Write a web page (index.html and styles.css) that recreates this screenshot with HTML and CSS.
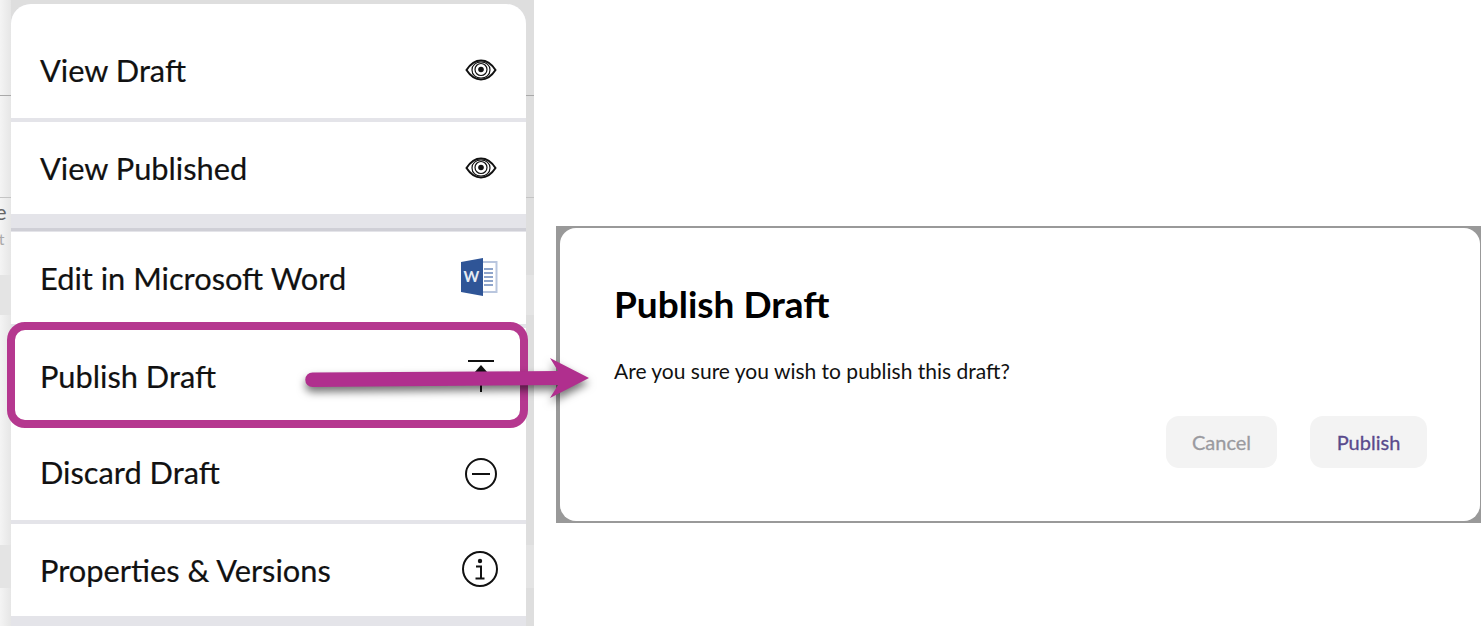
FILE: index.html
```html
<!DOCTYPE html>
<html lang="en">
<head>
  <meta charset="UTF-8">
  <title>Publish Draft</title>
  <link rel="stylesheet" href="styles.css">
</head>
<body>
<div class="page">
  <div class="sheet">
    <span class="behind behind-e">e</span>
    <span class="behind behind-at">at</span>

    <div class="menu">
      <div class="menu-item first">
        <span>View Draft</span>
        <svg class="icon" viewBox="0 0 32 24"><path class="line" d="M1.5 12C6 5 11 2.5 16 2.5S26 5 30.5 12C26 19 21 21.500 16 21.500S6 19 1.500 12Z"/><path class="line thin" d="M7 12c0-5 4-8 9-8s9 3 9 8-4 8-9 8-9-3-9-8Z"/><circle class="line thin" cx="16" cy="11.500" r="6"/><circle class="dot" cx="16" cy="11.500" r="2.800"/></svg>
      </div>
      <div class="menu-item second">
        <span>View Published</span>
        <svg class="icon" viewBox="0 0 32 24"><path class="line" d="M1.5 12C6 5 11 2.5 16 2.5S26 5 30.5 12C26 19 21 21.500 16 21.500S6 19 1.500 12Z"/><path class="line thin" d="M7 12c0-5 4-8 9-8s9 3 9 8-4 8-9 8-9-3-9-8Z"/><circle class="line thin" cx="16" cy="11.500" r="6"/><circle class="dot" cx="16" cy="11.500" r="2.800"/></svg>
      </div>
      <div class="menu-divider"></div>
      <div class="menu-item edit">
        <span>Edit in Microsoft Word</span>
        <svg class="icon word" viewBox="0 0 38 38">
          <path fill="#b9c6de" d="M22 3h15.500v32H22z"/>
          <path fill="#fff" d="M22 5h13.500v28H22z"/>
          <path fill="#8fa5cb" d="M24 10h9v2h-9zM24 14h9v2h-9zM24 18h9v2h-9zM24 22h9v2h-9zM24 26h9v2h-9z"/>
          <path fill="#2f5597" d="M1 4 23 0v38L1 34Z"/>
          <text class="word-letter" x="11.500" y="24" text-anchor="middle">W</text>
        </svg>
      </div>
      <div class="menu-item publish">
        <span>Publish Draft</span>
        <svg class="icon" viewBox="0 0 32 34"><path class="line" d="M3 2h26"/><path class="line" d="M16 33V9"/><path class="dot" d="M16 6l7 8H9Z"/></svg>
      </div>
      <div class="menu-item discard">
        <span>Discard Draft</span>
        <svg class="icon" viewBox="0 0 32 32"><circle class="line" cx="16" cy="16" r="15"/><path class="line" d="M7 16h18"/></svg>
      </div>
      <div class="menu-item props">
        <span>Properties &amp; Versions</span>
        <svg class="icon" viewBox="0 0 36 36"><circle class="line" cx="18" cy="18" r="17"/><circle class="dot" cx="18" cy="10" r="2.200"/><path class="line" d="M14 15.500h5V27M13.500 27.500h9"/></svg>
      </div>
    </div>
  </div>

  <div class="dialog">
    <div class="dialog-inner">
      <h1>Publish Draft</h1>
      <p>Are you sure you wish to publish this draft?</p>
      <div class="dialog-actions">
        <button class="btn btn-cancel">Cancel</button>
        <button class="btn btn-publish">Publish</button>
      </div>
    </div>
  </div>

  <!-- callout over the screenshot -->
  <div class="highlight"></div>
  <svg class="arrow" viewBox="0 0 300 60" width="300" height="60">
    <path d="M13.500 14.500 259 13 251 0 290 20 251 40 259 27 13.500 29a7.250 7.250 0 0 1 0-14.500Z"/>
  </svg>
</div>
</body>
</html>
```

FILE: styles.css
```css
* {
  margin: 0;
  padding: 0;
  box-sizing: border-box;
}

body {
  font-family: 'Lato', sans-serif;
  background-color: white;
  color: #111;
  overflow: hidden;
}

.page {
  position: relative;
  display: flex;
  align-items: flex-start;
  width: 1484px;
  height: 626px;
}

/* grey app behind the menu, only the edges show */
.sheet {
  position: relative;
  flex: none;
  width: 534px;
  height: 626px;
  padding: 4px 8px 0 11px;
  overflow: hidden;
  background:
    linear-gradient(#a9a9a9, #a9a9a9) 0 95px / 100% 1px no-repeat,
    linear-gradient(#c4c4c4, #c4c4c4) 0 197px / 100% 1px no-repeat,
    linear-gradient(#e4e4e4, #e4e4e4) 0 275px / 100% 40px no-repeat,
    linear-gradient(#e4e4e4, #e4e4e4) 0 545px / 100% 43px no-repeat,
    linear-gradient(to right, #f4f4f4, #e6e6e6 11px, #dedede 11px);
}

.behind {
  position: absolute;
}

.behind-e {
  top: 198px;
  left: -5px;
  color: #666;
  font-size: 22px;
}

.behind-at {
  top: 229px;
  left: -9px;
  font-size: 16px;
  color: #aaa;
}

.menu {
  position: relative;
  width: 515px;
  background-color: #e4e4e9;
  border-radius: 20px 20px 0 0;
  padding-bottom: 10px;
}

.menu-item {
  display: flex;
  justify-content: space-between;
  align-items: center;
  height: 92px;
  padding: 0 29px;
  background-color: white;
  font-size: 30.800px;
  line-height: 36px;
  -webkit-text-stroke: 0.2px #111;
}

.menu-item span {
  padding-top: 2px;
}

.menu-item.first {
  height: 114px;
  margin-bottom: 4px;
  padding-top: 18px;
  border-radius: 20px 20px 0 0;
}

.menu-divider {
  height: 17px;
  border-bottom: 3px solid #cfcfd6;
  margin-bottom: 1px;
}

/* the gaps around the publish row sit under the highlight */
.menu-item.edit {
  margin-bottom: 4px;
}

.menu-item.publish,
.menu-item.discard {
  height: 96px;
}

.menu-item.discard {
  margin-bottom: 4px;
}

.icon {
  display: block;
  width: 32px;
  height: 24px;
}

.edit .icon { width: 38px; height: 38px; margin: -2px -1px 0 0; }
.publish .icon { height: 34px; }
.discard .icon { height: 32px; margin-top: 3px; }
.props .icon { width: 36px; height: 36px; margin: -2px -1px 0 0; }

.line {
  fill: none;
  stroke: #111;
  stroke-width: 2;
}

.line.thin {
  stroke-width: 1.2;
}

.dot {
  fill: #111;
}

.word-letter {
  fill: #e6ebf4;
  font-family: 'Lato', sans-serif;
  font-size: 15px;
  font-weight: 700;
  stroke: none;
}

.dialog {
  flex: none;
  width: 925px;
  height: 297px;
  margin: 226px 0 0 22px;
  padding: 2px 1px 2px 4px;
  background-color: #999;
}

.dialog-inner {
  height: 100%;
  padding: 54px 53px 0 54px;
  background-color: white;
  border-radius: 16px;
}

h1 {
  font-size: 37px;
  line-height: 44px;
  font-weight: 700;
  color: black;
  margin-bottom: 33px;
}

p {
  font-size: 21px;
  line-height: 24px;
}

.dialog-actions {
  display: flex;
  justify-content: flex-end;
  gap: 33px;
  margin-top: 33px;
}

.btn {
  height: 52px;
  border: none;
  border-radius: 13px;
  background-color: #f3f3f3;
  font-family: 'Lato', sans-serif;
  font-size: 20px;
  font-weight: 400;
  -webkit-text-stroke: 0.3px currentColor;
}

.btn-cancel {
  width: 111px;
  color: #9a9a9f;
}

.btn-publish {
  width: 117px;
  color: #5a4a8c;
}

.highlight {
  position: absolute;
  left: 7px;
  top: 322px;
  width: 521px;
  height: 106px;
  border: 8px solid #b5388f;
  border-radius: 18px;
}

.arrow {
  position: absolute;
  left: 299px;
  top: 358px;
  overflow: visible;
  filter: drop-shadow(0 5px 4px rgba(0, 0, 0, 0.55));
}

.arrow path {
  fill: #b02f8e;
}
```
